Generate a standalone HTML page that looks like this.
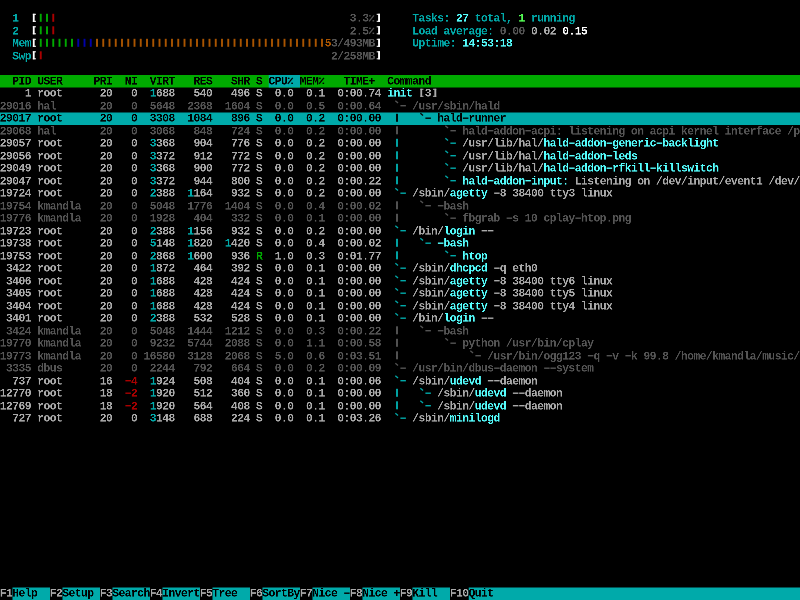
<!DOCTYPE html><html><head><meta charset="utf-8"><style>html,body{margin:0;padding:0;background:#000;width:800px;height:600px;overflow:hidden;position:relative}.b{position:absolute}.r{position:absolute;left:0;white-space:pre;font-family:"Liberation Mono",monospace;font-weight:bold;font-size:41.66px;line-height:41.66px;transform-origin:0 0;transform:scale(0.27,0.275);will-change:transform;letter-spacing:-1.8519px}.t{position:absolute;white-space:pre}svg{position:absolute;left:0;top:0}</style></head><body><svg width="800" height="600" viewBox="0 0 800 600"><rect x="0.00" y="75.00" width="800.00" height="12.50" fill="#00aa00"/><rect x="268.75" y="75.00" width="31.25" height="12.50" fill="#00aaaa"/><rect x="0.00" y="112.50" width="800.00" height="12.50" fill="#00aaaa"/><rect x="12.50" y="587.50" width="37.50" height="12.50" fill="#00aaaa"/><rect x="62.50" y="587.50" width="37.50" height="12.50" fill="#00aaaa"/><rect x="112.50" y="587.50" width="37.50" height="12.50" fill="#00aaaa"/><rect x="162.50" y="587.50" width="37.50" height="12.50" fill="#00aaaa"/><rect x="212.50" y="587.50" width="37.50" height="12.50" fill="#00aaaa"/><rect x="262.50" y="587.50" width="37.50" height="12.50" fill="#00aaaa"/><rect x="312.50" y="587.50" width="37.50" height="12.50" fill="#00aaaa"/><rect x="362.50" y="587.50" width="37.50" height="12.50" fill="#00aaaa"/><rect x="412.50" y="587.50" width="37.50" height="12.50" fill="#00aaaa"/><rect x="468.75" y="587.50" width="331.25" height="12.50" fill="#00aaaa"/></svg><div class="r" style="top:13.000px"><span class="t" style="left:45.370px;color:#00aaaa">1</span><span class="t" style="left:1295.370px;color:#555555">3.3</span><span class="t" style="left:1526.852px;color:#00aaaa">Tasks:</span><span class="t" style="left:1688.889px;color:#55ffff">27</span><span class="t" style="left:1758.333px;color:#00aaaa">total,</span><span class="t" style="left:1920.370px;color:#55ff55">1</span><span class="t" style="left:1966.667px;color:#00aaaa">running</span></div><div class="r" style="top:25.500px"><span class="t" style="left:45.370px;color:#00aaaa">2</span><span class="t" style="left:1295.370px;color:#555555">2.5</span><span class="t" style="left:1526.852px;color:#00aaaa">Load average:</span><span class="t" style="left:1850.926px;color:#555555">0.00</span><span class="t" style="left:1966.667px;color:#aaaaaa">0.02</span><span class="t" style="left:2082.407px;color:#ffffff">0.15</span></div><div class="r" style="top:38.000px"><span class="t" style="left:45.370px;color:#00aaaa">Mem</span><span class="t" style="left:1202.778px;color:#aa5500">5</span><span class="t" style="left:1225.926px;color:#555555">3/493MB</span><span class="t" style="left:1526.852px;color:#00aaaa">Uptime:</span><span class="t" style="left:1712.037px;color:#55ffff">14:53:18</span></div><div class="r" style="top:50.500px"><span class="t" style="left:45.370px;color:#00aaaa">Swp</span><span class="t" style="left:1225.926px;color:#555555">2/258MB</span></div><div class="r" style="top:75.500px"><span class="t" style="left:45.370px;color:#000000">PID USER     PRI  NI  VIRT   RES   SHR S CPU  MEM    TIME+  Command</span></div><div class="r" style="top:88.000px"><span class="t" style="left:91.667px;color:#aaaaaa">1 root      20   0</span><span class="t" style="left:554.630px;color:#00aaaa">1</span><span class="t" style="left:577.778px;color:#aaaaaa">688   540   496 S  0.0  0.1  0:00.74</span><span class="t" style="left:1434.259px;color:#55ffff">init</span><span class="t" style="left:1573.148px;color:#aaaaaa">3</span></div><div class="r" style="top:100.500px"><span class="t" style="left:-0.926px;color:#555555">29016 hal       20   0  5648  2368  1604 S  0.0  0.5  0:00.64     /usr/sbin/hald</span></div><div class="r" style="top:113.000px"><span class="t" style="left:-0.926px;color:#000000">29017 root      20   0  3308  1084   896 S  0.0  0.2  0:00.00         hald runner</span></div><div class="r" style="top:125.500px"><span class="t" style="left:-0.926px;color:#555555">29068 hal       20   0  3068   848   724 S  0.0  0.2  0:00.00             hald addon acpi: listening on acpi kernel interface /p</span></div><div class="r" style="top:138.000px"><span class="t" style="left:-0.926px;color:#aaaaaa">29057 root      20   0</span><span class="t" style="left:554.630px;color:#00aaaa">3</span><span class="t" style="left:577.778px;color:#aaaaaa">368   904   776 S  0.0  0.2  0:00.00             /usr/lib/hal/</span><span class="t" style="left:2012.963px;color:#55ffff">hald addon generic backlight</span></div><div class="r" style="top:150.500px"><span class="t" style="left:-0.926px;color:#aaaaaa">29056 root      20   0</span><span class="t" style="left:554.630px;color:#00aaaa">3</span><span class="t" style="left:577.778px;color:#aaaaaa">372   912   772 S  0.0  0.2  0:00.00             /usr/lib/hal/</span><span class="t" style="left:2012.963px;color:#55ffff">hald addon leds</span></div><div class="r" style="top:163.000px"><span class="t" style="left:-0.926px;color:#aaaaaa">29049 root      20   0</span><span class="t" style="left:554.630px;color:#00aaaa">3</span><span class="t" style="left:577.778px;color:#aaaaaa">368   900   772 S  0.0  0.2  0:00.00             /usr/lib/hal/</span><span class="t" style="left:2012.963px;color:#55ffff">hald addon rfkill killswitch</span></div><div class="r" style="top:175.500px"><span class="t" style="left:-0.926px;color:#aaaaaa">29047 root      20   0</span><span class="t" style="left:554.630px;color:#00aaaa">3</span><span class="t" style="left:577.778px;color:#aaaaaa">372   944   800 S  0.0  0.2  0:00.22</span><span class="t" style="left:1712.037px;color:#55ffff">hald addon input:</span><span class="t" style="left:2128.704px;color:#aaaaaa">Listening on /dev/input/event1 /dev/</span></div><div class="r" style="top:188.000px"><span class="t" style="left:-0.926px;color:#aaaaaa">19724 root      20   0</span><span class="t" style="left:554.630px;color:#00aaaa">2</span><span class="t" style="left:577.778px;color:#aaaaaa">388</span><span class="t" style="left:693.519px;color:#00aaaa">1</span><span class="t" style="left:716.667px;color:#aaaaaa">164   932 S  0.0  0.2  0:00.00     /sbin/</span><span class="t" style="left:1665.741px;color:#55ffff">agetty</span><span class="t" style="left:1850.926px;color:#aaaaaa">8 38400 tty3 linux</span></div><div class="r" style="top:200.500px"><span class="t" style="left:-0.926px;color:#555555">19754 kmandla   20   0  5048  1776  1404 S  0.0  0.4  0:00.02          bash</span></div><div class="r" style="top:213.000px"><span class="t" style="left:-0.926px;color:#555555">19776 kmandla   20   0  1928   404   332 S  0.0  0.1  0:00.00             fbgrab  s 10 cplay htop.png</span></div><div class="r" style="top:225.500px"><span class="t" style="left:-0.926px;color:#aaaaaa">19723 root      20   0</span><span class="t" style="left:554.630px;color:#00aaaa">2</span><span class="t" style="left:577.778px;color:#aaaaaa">388</span><span class="t" style="left:693.519px;color:#00aaaa">1</span><span class="t" style="left:716.667px;color:#aaaaaa">156   932 S  0.0  0.2  0:00.00     /bin/</span><span class="t" style="left:1642.593px;color:#55ffff">login</span></div><div class="r" style="top:238.000px"><span class="t" style="left:-0.926px;color:#aaaaaa">19738 root      20   0</span><span class="t" style="left:554.630px;color:#00aaaa">5</span><span class="t" style="left:577.778px;color:#aaaaaa">148</span><span class="t" style="left:693.519px;color:#00aaaa">1</span><span class="t" style="left:716.667px;color:#aaaaaa">820</span><span class="t" style="left:832.407px;color:#00aaaa">1</span><span class="t" style="left:855.556px;color:#aaaaaa">420 S  0.0  0.4  0:00.02</span><span class="t" style="left:1642.593px;color:#55ffff">bash</span></div><div class="r" style="top:250.500px"><span class="t" style="left:-0.926px;color:#aaaaaa">19753 root      20   0</span><span class="t" style="left:554.630px;color:#00aaaa">2</span><span class="t" style="left:577.778px;color:#aaaaaa">868</span><span class="t" style="left:693.519px;color:#00aaaa">1</span><span class="t" style="left:716.667px;color:#aaaaaa">600   936</span><span class="t" style="left:948.148px;color:#00aa00">R</span><span class="t" style="left:1017.593px;color:#aaaaaa">1.0  0.3  0:01.77</span><span class="t" style="left:1712.037px;color:#55ffff">htop</span></div><div class="r" style="top:263.000px"><span class="t" style="left:22.222px;color:#aaaaaa">3422 root      20   0</span><span class="t" style="left:554.630px;color:#00aaaa">1</span><span class="t" style="left:577.778px;color:#aaaaaa">872   464   392 S  0.0  0.1  0:00.00     /sbin/</span><span class="t" style="left:1665.741px;color:#55ffff">dhcpcd</span><span class="t" style="left:1850.926px;color:#aaaaaa">q eth0</span></div><div class="r" style="top:275.500px"><span class="t" style="left:22.222px;color:#aaaaaa">3406 root      20   0</span><span class="t" style="left:554.630px;color:#00aaaa">1</span><span class="t" style="left:577.778px;color:#aaaaaa">688   428   424 S  0.0  0.1  0:00.00     /sbin/</span><span class="t" style="left:1665.741px;color:#55ffff">agetty</span><span class="t" style="left:1850.926px;color:#aaaaaa">8 38400 tty6 linux</span></div><div class="r" style="top:288.000px"><span class="t" style="left:22.222px;color:#aaaaaa">3405 root      20   0</span><span class="t" style="left:554.630px;color:#00aaaa">1</span><span class="t" style="left:577.778px;color:#aaaaaa">688   428   424 S  0.0  0.1  0:00.00     /sbin/</span><span class="t" style="left:1665.741px;color:#55ffff">agetty</span><span class="t" style="left:1850.926px;color:#aaaaaa">8 38400 tty5 linux</span></div><div class="r" style="top:300.500px"><span class="t" style="left:22.222px;color:#aaaaaa">3404 root      20   0</span><span class="t" style="left:554.630px;color:#00aaaa">1</span><span class="t" style="left:577.778px;color:#aaaaaa">688   428   424 S  0.0  0.1  0:00.00     /sbin/</span><span class="t" style="left:1665.741px;color:#55ffff">agetty</span><span class="t" style="left:1850.926px;color:#aaaaaa">8 38400 tty4 linux</span></div><div class="r" style="top:313.000px"><span class="t" style="left:22.222px;color:#aaaaaa">3401 root      20   0</span><span class="t" style="left:554.630px;color:#00aaaa">2</span><span class="t" style="left:577.778px;color:#aaaaaa">388   532   528 S  0.0  0.1  0:00.00     /bin/</span><span class="t" style="left:1642.593px;color:#55ffff">login</span></div><div class="r" style="top:325.500px"><span class="t" style="left:22.222px;color:#555555">3424 kmandla   20   0  5048  1444  1212 S  0.0  0.3  0:00.22          bash</span></div><div class="r" style="top:338.000px"><span class="t" style="left:-0.926px;color:#555555">19770 kmandla   20   0  9232  5744  2088 S  0.0  1.1  0:00.58             python /usr/bin/cplay</span></div><div class="r" style="top:350.500px"><span class="t" style="left:-0.926px;color:#555555">19773 kmandla   20   0 16580  3128  2068 S  5.0  0.6  0:03.51                 /usr/bin/ogg123  q  v  k 99.8 /home/kmandla/music/</span></div><div class="r" style="top:363.000px"><span class="t" style="left:22.222px;color:#555555">3335 dbus      20   0  2244   792   664 S  0.0  0.2  0:00.09     /usr/bin/dbus daemon   system</span></div><div class="r" style="top:375.500px"><span class="t" style="left:45.370px;color:#aaaaaa">737 root      16</span><span class="t" style="left:485.185px;color:#aa0000">4</span><span class="t" style="left:554.630px;color:#00aaaa">1</span><span class="t" style="left:577.778px;color:#aaaaaa">924   508   404 S  0.0  0.1  0:00.06     /sbin/</span><span class="t" style="left:1665.741px;color:#55ffff">udevd</span><span class="t" style="left:1850.926px;color:#aaaaaa">daemon</span></div><div class="r" style="top:388.000px"><span class="t" style="left:-0.926px;color:#aaaaaa">12770 root      18</span><span class="t" style="left:485.185px;color:#aa0000">2</span><span class="t" style="left:554.630px;color:#00aaaa">1</span><span class="t" style="left:577.778px;color:#aaaaaa">920   512   360 S  0.0  0.1  0:00.00         /sbin/</span><span class="t" style="left:1758.333px;color:#55ffff">udevd</span><span class="t" style="left:1943.519px;color:#aaaaaa">daemon</span></div><div class="r" style="top:400.500px"><span class="t" style="left:-0.926px;color:#aaaaaa">12769 root      18</span><span class="t" style="left:485.185px;color:#aa0000">2</span><span class="t" style="left:554.630px;color:#00aaaa">1</span><span class="t" style="left:577.778px;color:#aaaaaa">920   564   408 S  0.0  0.1  0:00.00         /sbin/</span><span class="t" style="left:1758.333px;color:#55ffff">udevd</span><span class="t" style="left:1943.519px;color:#aaaaaa">daemon</span></div><div class="r" style="top:413.000px"><span class="t" style="left:45.370px;color:#aaaaaa">727 root      20   0</span><span class="t" style="left:554.630px;color:#00aaaa">3</span><span class="t" style="left:577.778px;color:#aaaaaa">148   688   224 S  0.0  0.1  0:03.26     /sbin/</span><span class="t" style="left:1665.741px;color:#55ffff">minilogd</span></div><div class="r" style="top:588.000px"><span class="t" style="left:-0.926px;color:#aaaaaa">F1</span><span class="t" style="left:45.370px;color:#000000">Help</span><span class="t" style="left:184.259px;color:#aaaaaa">F2</span><span class="t" style="left:230.556px;color:#000000">Setup</span><span class="t" style="left:369.444px;color:#aaaaaa">F3</span><span class="t" style="left:415.741px;color:#000000">Search</span><span class="t" style="left:554.630px;color:#aaaaaa">F4</span><span class="t" style="left:600.926px;color:#000000">Invert</span><span class="t" style="left:739.815px;color:#aaaaaa">F5</span><span class="t" style="left:786.111px;color:#000000">Tree</span><span class="t" style="left:925.000px;color:#aaaaaa">F6</span><span class="t" style="left:971.296px;color:#000000">SortBy</span><span class="t" style="left:1110.185px;color:#aaaaaa">F7</span><span class="t" style="left:1156.481px;color:#000000">Nice</span><span class="t" style="left:1295.370px;color:#aaaaaa">F8</span><span class="t" style="left:1341.667px;color:#000000">Nice +</span><span class="t" style="left:1480.556px;color:#aaaaaa">F9</span><span class="t" style="left:1526.852px;color:#000000">Kill</span><span class="t" style="left:1665.741px;color:#aaaaaa">F10</span><span class="t" style="left:1735.185px;color:#000000">Quit</span></div><svg width="800" height="600" viewBox="0 0 800 600"><rect x="39.80" y="13.80" width="1.90" height="8.00" fill="#00aa00"/><rect x="46.05" y="13.80" width="1.90" height="8.00" fill="#00aa00"/><rect x="52.30" y="13.80" width="1.90" height="8.00" fill="#aa0000"/><rect x="39.80" y="26.30" width="1.90" height="8.00" fill="#00aa00"/><rect x="46.05" y="26.30" width="1.90" height="8.00" fill="#00aa00"/><rect x="52.30" y="26.30" width="1.90" height="8.00" fill="#aa0000"/><rect x="39.80" y="38.80" width="1.90" height="8.00" fill="#00aa00"/><rect x="46.05" y="38.80" width="1.90" height="8.00" fill="#00aa00"/><rect x="52.30" y="38.80" width="1.90" height="8.00" fill="#00aa00"/><rect x="58.55" y="38.80" width="1.90" height="8.00" fill="#00aa00"/><rect x="64.80" y="38.80" width="1.90" height="8.00" fill="#00aa00"/><rect x="71.05" y="38.80" width="1.90" height="8.00" fill="#00aa00"/><rect x="77.30" y="38.80" width="1.90" height="8.00" fill="#0000aa"/><rect x="83.55" y="38.80" width="1.90" height="8.00" fill="#0000aa"/><rect x="89.80" y="38.80" width="1.90" height="8.00" fill="#0000aa"/><rect x="96.05" y="38.80" width="1.90" height="8.00" fill="#aa5500"/><rect x="102.30" y="38.80" width="1.90" height="8.00" fill="#aa5500"/><rect x="108.55" y="38.80" width="1.90" height="8.00" fill="#aa5500"/><rect x="114.80" y="38.80" width="1.90" height="8.00" fill="#aa5500"/><rect x="121.05" y="38.80" width="1.90" height="8.00" fill="#aa5500"/><rect x="127.30" y="38.80" width="1.90" height="8.00" fill="#aa5500"/><rect x="133.55" y="38.80" width="1.90" height="8.00" fill="#aa5500"/><rect x="139.80" y="38.80" width="1.90" height="8.00" fill="#aa5500"/><rect x="146.05" y="38.80" width="1.90" height="8.00" fill="#aa5500"/><rect x="152.30" y="38.80" width="1.90" height="8.00" fill="#aa5500"/><rect x="158.55" y="38.80" width="1.90" height="8.00" fill="#aa5500"/><rect x="164.80" y="38.80" width="1.90" height="8.00" fill="#aa5500"/><rect x="171.05" y="38.80" width="1.90" height="8.00" fill="#aa5500"/><rect x="177.30" y="38.80" width="1.90" height="8.00" fill="#aa5500"/><rect x="183.55" y="38.80" width="1.90" height="8.00" fill="#aa5500"/><rect x="189.80" y="38.80" width="1.90" height="8.00" fill="#aa5500"/><rect x="196.05" y="38.80" width="1.90" height="8.00" fill="#aa5500"/><rect x="202.30" y="38.80" width="1.90" height="8.00" fill="#aa5500"/><rect x="208.55" y="38.80" width="1.90" height="8.00" fill="#aa5500"/><rect x="214.80" y="38.80" width="1.90" height="8.00" fill="#aa5500"/><rect x="221.05" y="38.80" width="1.90" height="8.00" fill="#aa5500"/><rect x="227.30" y="38.80" width="1.90" height="8.00" fill="#aa5500"/><rect x="233.55" y="38.80" width="1.90" height="8.00" fill="#aa5500"/><rect x="239.80" y="38.80" width="1.90" height="8.00" fill="#aa5500"/><rect x="246.05" y="38.80" width="1.90" height="8.00" fill="#aa5500"/><rect x="252.30" y="38.80" width="1.90" height="8.00" fill="#aa5500"/><rect x="258.55" y="38.80" width="1.90" height="8.00" fill="#aa5500"/><rect x="264.80" y="38.80" width="1.90" height="8.00" fill="#aa5500"/><rect x="271.05" y="38.80" width="1.90" height="8.00" fill="#aa5500"/><rect x="277.30" y="38.80" width="1.90" height="8.00" fill="#aa5500"/><rect x="283.55" y="38.80" width="1.90" height="8.00" fill="#aa5500"/><rect x="289.80" y="38.80" width="1.90" height="8.00" fill="#aa5500"/><rect x="296.05" y="38.80" width="1.90" height="8.00" fill="#aa5500"/><rect x="302.30" y="38.80" width="1.90" height="8.00" fill="#aa5500"/><rect x="308.55" y="38.80" width="1.90" height="8.00" fill="#aa5500"/><rect x="314.80" y="38.80" width="1.90" height="8.00" fill="#aa5500"/><rect x="321.05" y="38.80" width="1.90" height="8.00" fill="#aa5500"/><rect x="39.80" y="51.30" width="1.90" height="8.00" fill="#aa0000"/><rect x="32.85" y="13.80" width="1.80" height="8.00" fill="#ffffff"/><rect x="32.85" y="13.80" width="3.10" height="1.00" fill="#ffffff"/><rect x="32.85" y="20.80" width="3.10" height="1.00" fill="#ffffff"/><line x1="369.05" y1="21.30" x2="373.95" y2="15.30" stroke="#555555" stroke-width="1.3"/><rect x="369.15" y="15.10" width="1.60" height="1.40" fill="#555555"/><rect x="372.55" y="20.10" width="1.60" height="1.40" fill="#555555"/><rect x="378.10" y="13.80" width="1.90" height="8.00" fill="#ffffff"/><rect x="376.70" y="13.80" width="3.30" height="1.00" fill="#ffffff"/><rect x="376.70" y="20.80" width="3.30" height="1.00" fill="#ffffff"/><rect x="32.85" y="26.30" width="1.80" height="8.00" fill="#ffffff"/><rect x="32.85" y="26.30" width="3.10" height="1.00" fill="#ffffff"/><rect x="32.85" y="33.30" width="3.10" height="1.00" fill="#ffffff"/><line x1="369.05" y1="33.80" x2="373.95" y2="27.80" stroke="#555555" stroke-width="1.3"/><rect x="369.15" y="27.60" width="1.60" height="1.40" fill="#555555"/><rect x="372.55" y="32.60" width="1.60" height="1.40" fill="#555555"/><rect x="378.10" y="26.30" width="1.90" height="8.00" fill="#ffffff"/><rect x="376.70" y="26.30" width="3.30" height="1.00" fill="#ffffff"/><rect x="376.70" y="33.30" width="3.30" height="1.00" fill="#ffffff"/><rect x="32.85" y="38.80" width="1.80" height="8.00" fill="#ffffff"/><rect x="32.85" y="38.80" width="3.10" height="1.00" fill="#ffffff"/><rect x="32.85" y="45.80" width="3.10" height="1.00" fill="#ffffff"/><rect x="378.10" y="38.80" width="1.90" height="8.00" fill="#ffffff"/><rect x="376.70" y="38.80" width="3.30" height="1.00" fill="#ffffff"/><rect x="376.70" y="45.80" width="3.30" height="1.00" fill="#ffffff"/><rect x="32.85" y="51.30" width="1.80" height="8.00" fill="#ffffff"/><rect x="32.85" y="51.30" width="3.10" height="1.00" fill="#ffffff"/><rect x="32.85" y="58.30" width="3.10" height="1.00" fill="#ffffff"/><rect x="378.10" y="51.30" width="1.90" height="8.00" fill="#ffffff"/><rect x="376.70" y="51.30" width="3.30" height="1.00" fill="#ffffff"/><rect x="376.70" y="58.30" width="3.30" height="1.00" fill="#ffffff"/><line x1="287.80" y1="83.80" x2="292.70" y2="77.80" stroke="#000000" stroke-width="1.3"/><rect x="287.90" y="77.60" width="1.60" height="1.40" fill="#000000"/><rect x="291.30" y="82.60" width="1.60" height="1.40" fill="#000000"/><line x1="319.05" y1="83.80" x2="323.95" y2="77.80" stroke="#000000" stroke-width="1.3"/><rect x="319.15" y="77.60" width="1.60" height="1.40" fill="#000000"/><rect x="322.55" y="82.60" width="1.60" height="1.40" fill="#000000"/><rect x="420.35" y="88.80" width="1.80" height="8.00" fill="#aaaaaa"/><rect x="420.35" y="88.80" width="3.10" height="1.00" fill="#aaaaaa"/><rect x="420.35" y="95.80" width="3.10" height="1.00" fill="#aaaaaa"/><rect x="434.35" y="88.80" width="1.90" height="8.00" fill="#aaaaaa"/><rect x="432.95" y="88.80" width="3.30" height="1.00" fill="#aaaaaa"/><rect x="432.95" y="95.80" width="3.30" height="1.00" fill="#aaaaaa"/><line x1="395.35" y1="100.70" x2="398.05" y2="102.90" stroke="#555555" stroke-width="1.30"/><rect x="400.40" y="105.00" width="5.50" height="1.40" fill="#555555"/><rect x="396.05" y="113.80" width="1.90" height="8.00" fill="#000000"/><line x1="420.35" y1="113.20" x2="423.05" y2="115.40" stroke="#000000" stroke-width="1.30"/><rect x="425.40" y="117.50" width="5.50" height="1.40" fill="#000000"/><rect x="462.90" y="117.50" width="5.50" height="1.40" fill="#000000"/><rect x="396.05" y="126.30" width="1.90" height="8.00" fill="#555555"/><line x1="445.35" y1="125.70" x2="448.05" y2="127.90" stroke="#555555" stroke-width="1.30"/><rect x="450.40" y="130.00" width="5.50" height="1.40" fill="#555555"/><rect x="487.90" y="130.00" width="5.50" height="1.40" fill="#555555"/><rect x="525.40" y="130.00" width="5.50" height="1.40" fill="#555555"/><rect x="396.05" y="138.80" width="1.90" height="8.00" fill="#00aaaa"/><line x1="445.35" y1="138.20" x2="448.05" y2="140.40" stroke="#00aaaa" stroke-width="1.30"/><rect x="450.40" y="142.50" width="5.50" height="1.40" fill="#00aaaa"/><rect x="569.15" y="142.50" width="5.50" height="1.40" fill="#55ffff"/><rect x="606.65" y="142.50" width="5.50" height="1.40" fill="#55ffff"/><rect x="656.65" y="142.50" width="5.50" height="1.40" fill="#55ffff"/><rect x="396.05" y="151.30" width="1.90" height="8.00" fill="#00aaaa"/><line x1="445.35" y1="150.70" x2="448.05" y2="152.90" stroke="#00aaaa" stroke-width="1.30"/><rect x="450.40" y="155.00" width="5.50" height="1.40" fill="#00aaaa"/><rect x="569.15" y="155.00" width="5.50" height="1.40" fill="#55ffff"/><rect x="606.65" y="155.00" width="5.50" height="1.40" fill="#55ffff"/><rect x="396.05" y="163.80" width="1.90" height="8.00" fill="#00aaaa"/><line x1="445.35" y1="163.20" x2="448.05" y2="165.40" stroke="#00aaaa" stroke-width="1.30"/><rect x="450.40" y="167.50" width="5.50" height="1.40" fill="#00aaaa"/><rect x="569.15" y="167.50" width="5.50" height="1.40" fill="#55ffff"/><rect x="606.65" y="167.50" width="5.50" height="1.40" fill="#55ffff"/><rect x="650.40" y="167.50" width="5.50" height="1.40" fill="#55ffff"/><rect x="396.05" y="176.30" width="1.90" height="8.00" fill="#00aaaa"/><line x1="445.35" y1="175.70" x2="448.05" y2="177.90" stroke="#00aaaa" stroke-width="1.30"/><rect x="450.40" y="180.00" width="5.50" height="1.40" fill="#00aaaa"/><rect x="487.90" y="180.00" width="5.50" height="1.40" fill="#55ffff"/><rect x="525.40" y="180.00" width="5.50" height="1.40" fill="#55ffff"/><line x1="395.35" y1="188.20" x2="398.05" y2="190.40" stroke="#00aaaa" stroke-width="1.30"/><rect x="400.40" y="192.50" width="5.50" height="1.40" fill="#00aaaa"/><rect x="494.15" y="192.50" width="5.50" height="1.40" fill="#aaaaaa"/><rect x="396.05" y="201.30" width="1.90" height="8.00" fill="#555555"/><line x1="420.35" y1="200.70" x2="423.05" y2="202.90" stroke="#555555" stroke-width="1.30"/><rect x="425.40" y="205.00" width="5.50" height="1.40" fill="#555555"/><rect x="437.90" y="205.00" width="5.50" height="1.40" fill="#555555"/><rect x="396.05" y="213.80" width="1.90" height="8.00" fill="#555555"/><line x1="445.35" y1="213.20" x2="448.05" y2="215.40" stroke="#555555" stroke-width="1.30"/><rect x="450.40" y="217.50" width="5.50" height="1.40" fill="#555555"/><rect x="506.65" y="217.50" width="5.50" height="1.40" fill="#555555"/><rect x="575.40" y="217.50" width="5.50" height="1.40" fill="#555555"/><line x1="395.35" y1="225.70" x2="398.05" y2="227.90" stroke="#00aaaa" stroke-width="1.30"/><rect x="400.40" y="230.00" width="5.50" height="1.40" fill="#00aaaa"/><rect x="481.65" y="230.00" width="5.50" height="1.40" fill="#aaaaaa"/><rect x="487.90" y="230.00" width="5.50" height="1.40" fill="#aaaaaa"/><rect x="396.05" y="238.80" width="1.90" height="8.00" fill="#00aaaa"/><line x1="420.35" y1="238.20" x2="423.05" y2="240.40" stroke="#00aaaa" stroke-width="1.30"/><rect x="425.40" y="242.50" width="5.50" height="1.40" fill="#00aaaa"/><rect x="437.90" y="242.50" width="5.50" height="1.40" fill="#55ffff"/><rect x="396.05" y="251.30" width="1.90" height="8.00" fill="#00aaaa"/><line x1="445.35" y1="250.70" x2="448.05" y2="252.90" stroke="#00aaaa" stroke-width="1.30"/><rect x="450.40" y="255.00" width="5.50" height="1.40" fill="#00aaaa"/><line x1="395.35" y1="263.20" x2="398.05" y2="265.40" stroke="#00aaaa" stroke-width="1.30"/><rect x="400.40" y="267.50" width="5.50" height="1.40" fill="#00aaaa"/><rect x="494.15" y="267.50" width="5.50" height="1.40" fill="#aaaaaa"/><line x1="395.35" y1="275.70" x2="398.05" y2="277.90" stroke="#00aaaa" stroke-width="1.30"/><rect x="400.40" y="280.00" width="5.50" height="1.40" fill="#00aaaa"/><rect x="494.15" y="280.00" width="5.50" height="1.40" fill="#aaaaaa"/><line x1="395.35" y1="288.20" x2="398.05" y2="290.40" stroke="#00aaaa" stroke-width="1.30"/><rect x="400.40" y="292.50" width="5.50" height="1.40" fill="#00aaaa"/><rect x="494.15" y="292.50" width="5.50" height="1.40" fill="#aaaaaa"/><line x1="395.35" y1="300.70" x2="398.05" y2="302.90" stroke="#00aaaa" stroke-width="1.30"/><rect x="400.40" y="305.00" width="5.50" height="1.40" fill="#00aaaa"/><rect x="494.15" y="305.00" width="5.50" height="1.40" fill="#aaaaaa"/><line x1="395.35" y1="313.20" x2="398.05" y2="315.40" stroke="#00aaaa" stroke-width="1.30"/><rect x="400.40" y="317.50" width="5.50" height="1.40" fill="#00aaaa"/><rect x="481.65" y="317.50" width="5.50" height="1.40" fill="#aaaaaa"/><rect x="487.90" y="317.50" width="5.50" height="1.40" fill="#aaaaaa"/><rect x="396.05" y="326.30" width="1.90" height="8.00" fill="#555555"/><line x1="420.35" y1="325.70" x2="423.05" y2="327.90" stroke="#555555" stroke-width="1.30"/><rect x="425.40" y="330.00" width="5.50" height="1.40" fill="#555555"/><rect x="437.90" y="330.00" width="5.50" height="1.40" fill="#555555"/><rect x="396.05" y="338.80" width="1.90" height="8.00" fill="#555555"/><line x1="445.35" y1="338.20" x2="448.05" y2="340.40" stroke="#555555" stroke-width="1.30"/><rect x="450.40" y="342.50" width="5.50" height="1.40" fill="#555555"/><rect x="396.05" y="351.30" width="1.90" height="8.00" fill="#555555"/><line x1="470.35" y1="350.70" x2="473.05" y2="352.90" stroke="#555555" stroke-width="1.30"/><rect x="475.40" y="355.00" width="5.50" height="1.40" fill="#555555"/><rect x="587.90" y="355.00" width="5.50" height="1.40" fill="#555555"/><rect x="606.65" y="355.00" width="5.50" height="1.40" fill="#555555"/><rect x="625.40" y="355.00" width="5.50" height="1.40" fill="#555555"/><line x1="395.35" y1="363.20" x2="398.05" y2="365.40" stroke="#555555" stroke-width="1.30"/><rect x="400.40" y="367.50" width="5.50" height="1.40" fill="#555555"/><rect x="494.15" y="367.50" width="5.50" height="1.40" fill="#555555"/><rect x="544.15" y="367.50" width="5.50" height="1.40" fill="#555555"/><rect x="550.40" y="367.50" width="5.50" height="1.40" fill="#555555"/><rect x="125.40" y="380.00" width="5.50" height="1.40" fill="#aa0000"/><line x1="395.35" y1="375.70" x2="398.05" y2="377.90" stroke="#00aaaa" stroke-width="1.30"/><rect x="400.40" y="380.00" width="5.50" height="1.40" fill="#00aaaa"/><rect x="487.90" y="380.00" width="5.50" height="1.40" fill="#aaaaaa"/><rect x="494.15" y="380.00" width="5.50" height="1.40" fill="#aaaaaa"/><rect x="125.40" y="392.50" width="5.50" height="1.40" fill="#aa0000"/><rect x="396.05" y="388.80" width="1.90" height="8.00" fill="#00aaaa"/><line x1="420.35" y1="388.20" x2="423.05" y2="390.40" stroke="#00aaaa" stroke-width="1.30"/><rect x="425.40" y="392.50" width="5.50" height="1.40" fill="#00aaaa"/><rect x="512.90" y="392.50" width="5.50" height="1.40" fill="#aaaaaa"/><rect x="519.15" y="392.50" width="5.50" height="1.40" fill="#aaaaaa"/><rect x="125.40" y="405.00" width="5.50" height="1.40" fill="#aa0000"/><rect x="396.05" y="401.30" width="1.90" height="8.00" fill="#00aaaa"/><line x1="420.35" y1="400.70" x2="423.05" y2="402.90" stroke="#00aaaa" stroke-width="1.30"/><rect x="425.40" y="405.00" width="5.50" height="1.40" fill="#00aaaa"/><rect x="512.90" y="405.00" width="5.50" height="1.40" fill="#aaaaaa"/><rect x="519.15" y="405.00" width="5.50" height="1.40" fill="#aaaaaa"/><line x1="395.35" y1="413.20" x2="398.05" y2="415.40" stroke="#00aaaa" stroke-width="1.30"/><rect x="400.40" y="417.50" width="5.50" height="1.40" fill="#00aaaa"/><rect x="344.15" y="592.50" width="5.50" height="1.40" fill="#000000"/></svg></body></html>
